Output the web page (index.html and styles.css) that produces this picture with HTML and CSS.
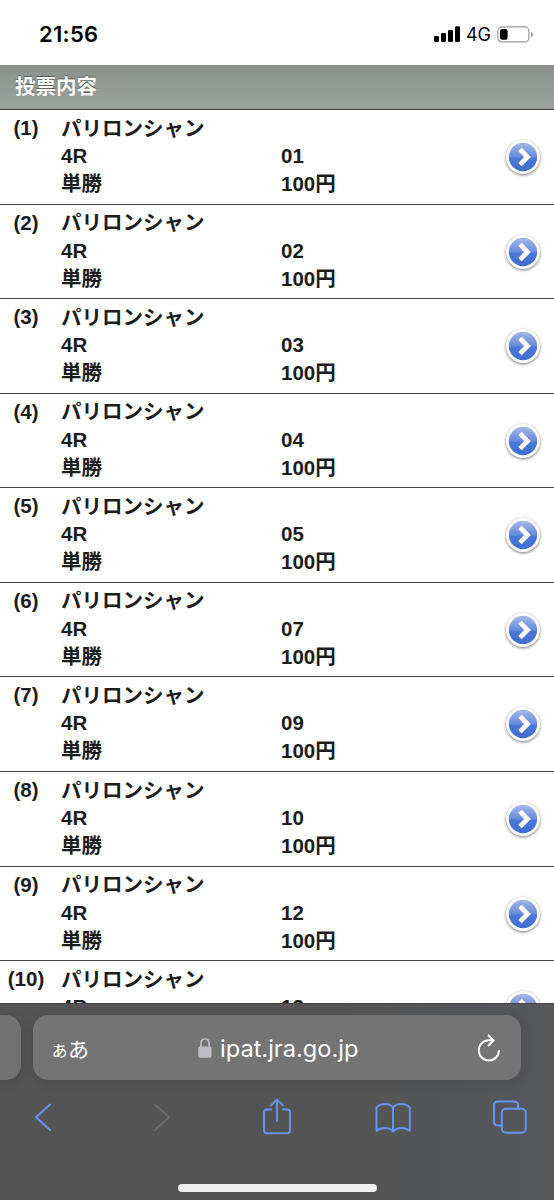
FILE: index.html
```html
<!DOCTYPE html>
<html lang="ja">
<head>
  <meta charset="UTF-8">
  <meta name="viewport" content="width=device-width, initial-scale=1.0">
  <title>投票内容</title>
  <link rel="stylesheet" href="styles.css">
</head>
<body>
  <!-- Shared arrow button used by every row -->
  <svg class="defs" width="0" height="0">
    <defs>
      <linearGradient id="blue" x1="0" y1="0" x2="0" y2="1">
        <stop offset="0" stop-color="#a5b9e9"/>
        <stop offset="0.5" stop-color="#668bdb"/>
        <stop offset="0.55" stop-color="#4c78d5"/>
        <stop offset="1" stop-color="#3e6dd2"/>
      </linearGradient>
      <symbol id="arrow" viewBox="0 0 36 36">
        <circle cx="18" cy="18" r="17" fill="#fff"/>
        <circle cx="18" cy="18" r="14.2" fill="url(#blue)"/>
        <path d="M15 10.3 L22.5 18 L15 25.7" fill="none" stroke="#fff" stroke-width="4.8"/>
      </symbol>
    </defs>
  </svg>

  <div class="status-bar">
    <span class="time">21:56</span>
    <div class="status-icons">
      <svg width="27" height="17" viewBox="0 0 27 17">
        <rect x="0" y="10" width="5" height="6" rx="1.3"/>
        <rect x="7" y="7" width="5" height="9" rx="1.3"/>
        <rect x="14" y="4" width="5" height="12" rx="1.3"/>
        <rect x="21" y="0.3" width="5" height="15.7" rx="1.3"/>
      </svg>
      <span class="network">4G</span>
      <svg width="37" height="17" viewBox="0 0 37 17">
        <rect x="0.8" y="0.9" width="31" height="15" rx="4" fill="none" stroke="#999" stroke-width="1.2"/>
        <rect x="3" y="3" width="7.6" height="10.8" rx="2.3"/>
        <path d="M34 5.7 Q36 6.3 36 8.4 Q36 10.5 34 11.1 Z" fill="#999"/>
      </svg>
    </div>
  </div>

  <h1 class="title">投票内容</h1>

  <ul class="bets">
    <li class="bet">
      <span class="no">(1)</span>
      <div class="detail">
        <span class="place">パリロンシャン</span>
        <span>4R</span><span>01</span>
        <span>単勝</span><span>100円</span>
      </div>
      <svg class="arrow"><use href="#arrow"/></svg>
    </li>
    <li class="bet">
      <span class="no">(2)</span>
      <div class="detail">
        <span class="place">パリロンシャン</span>
        <span>4R</span><span>02</span>
        <span>単勝</span><span>100円</span>
      </div>
      <svg class="arrow"><use href="#arrow"/></svg>
    </li>
    <li class="bet">
      <span class="no">(3)</span>
      <div class="detail">
        <span class="place">パリロンシャン</span>
        <span>4R</span><span>03</span>
        <span>単勝</span><span>100円</span>
      </div>
      <svg class="arrow"><use href="#arrow"/></svg>
    </li>
    <li class="bet">
      <span class="no">(4)</span>
      <div class="detail">
        <span class="place">パリロンシャン</span>
        <span>4R</span><span>04</span>
        <span>単勝</span><span>100円</span>
      </div>
      <svg class="arrow"><use href="#arrow"/></svg>
    </li>
    <li class="bet">
      <span class="no">(5)</span>
      <div class="detail">
        <span class="place">パリロンシャン</span>
        <span>4R</span><span>05</span>
        <span>単勝</span><span>100円</span>
      </div>
      <svg class="arrow"><use href="#arrow"/></svg>
    </li>
    <li class="bet">
      <span class="no">(6)</span>
      <div class="detail">
        <span class="place">パリロンシャン</span>
        <span>4R</span><span>07</span>
        <span>単勝</span><span>100円</span>
      </div>
      <svg class="arrow"><use href="#arrow"/></svg>
    </li>
    <li class="bet">
      <span class="no">(7)</span>
      <div class="detail">
        <span class="place">パリロンシャン</span>
        <span>4R</span><span>09</span>
        <span>単勝</span><span>100円</span>
      </div>
      <svg class="arrow"><use href="#arrow"/></svg>
    </li>
    <li class="bet">
      <span class="no">(8)</span>
      <div class="detail">
        <span class="place">パリロンシャン</span>
        <span>4R</span><span>10</span>
        <span>単勝</span><span>100円</span>
      </div>
      <svg class="arrow"><use href="#arrow"/></svg>
    </li>
    <li class="bet">
      <span class="no">(9)</span>
      <div class="detail">
        <span class="place">パリロンシャン</span>
        <span>4R</span><span>12</span>
        <span>単勝</span><span>100円</span>
      </div>
      <svg class="arrow"><use href="#arrow"/></svg>
    </li>
    <li class="bet">
      <span class="no">(10)</span>
      <div class="detail">
        <span class="place">パリロンシャン</span>
        <span>4R</span><span>13</span>
      </div>
      <svg class="arrow"><use href="#arrow"/></svg>
    </li>
  </ul>

  <!-- Browser bar -->
  <div class="browser">
    <div class="tabs">
      <div class="prev-tab"></div>
      <div class="address">
        <span class="reader"><small>ぁ</small>あ</span>
        <div class="url">
          <svg width="14" height="20" viewBox="0 0 14 20">
            <path d="M3 9 V5.5 Q3 1 7 1 Q11 1 11 5.5 V9" fill="none" stroke="#bdbcc3" stroke-width="1.7"/>
            <rect x="0.3" y="8.4" width="13.2" height="11.3" rx="1.8" fill="#bdbcc3"/>
          </svg>
          <span>ipat.jra.go.jp</span>
        </div>
        <svg class="reload" width="24" height="28" viewBox="0 0 24 28">
          <path d="M22 16.3 A10.1 10.1 0 1 1 11.9 6.2 H16"/>
          <path d="M11 1 L16.5 6.4 L11 12"/>
        </svg>
      </div>
    </div>
    <div class="toolbar">
      <svg width="36" height="40" viewBox="0 0 36 40">
        <path d="M25 7.5 L11 20.3 L25 33"/>
      </svg>
      <svg class="disabled" width="36" height="40" viewBox="0 0 36 40">
        <path d="M12 7.5 L26 20.3 L12 33"/>
      </svg>
      <svg width="36" height="40" viewBox="0 0 36 40">
        <path d="M13 12.5 H9 Q6 12.5 6 15.5 V33.2 Q6 36.2 9 36.2 H29 Q32 36.2 32 33.2 V15.5 Q32 12.5 29 12.5 H25"/>
        <path d="M19 24 V2.8 M13 8.4 L19 2.4 L25 8.4"/>
      </svg>
      <svg width="40" height="40" viewBox="0 0 40 40">
        <path d="M20 34.5 V10.5 Q17.5 7 12 7 Q6.5 7 3.5 10.5 V33.8 Q6.5 31 12 31 Q17 31 20 34.5 Q23 31 28.5 31 Q33.5 31 36.8 33.8 V10.5 Q33.5 7 28 7 Q22.5 7 20 10.5"/>
      </svg>
      <svg width="40" height="40" viewBox="0 0 40 40">
        <path d="M11.5 28.5 H8 Q4 28.5 4 24.5 V8.5 Q4 4.5 8 4.5 H24 Q28 4.5 28 8.5 V11.5"/>
        <rect x="11.8" y="11.8" width="24" height="24" rx="4"/>
      </svg>
    </div>
    <div class="home-bar"></div>
  </div>
</body>
</html>
```
FILE: styles.css
```css
* {
  box-sizing: border-box;
}

body {
  margin: 0;
  height: 1200px;
  display: flex;
  flex-direction: column;
  overflow: hidden;
  background-color: #fff;
  color: #1c1c1c;
  font-family: "Liberation Sans", "Noto Sans CJK JP", sans-serif;
}

.defs {
  position: absolute;
}

/* Status bar */
.status-bar {
  flex: none;
  height: 65px;
  padding: 3px 20px 0 39px;
  display: flex;
  align-items: center;
  justify-content: space-between;
  color: #000;
  font-family: Inter, sans-serif;
}

.time {
  font-size: 22px;
  font-weight: 600;
  letter-spacing: 0.3px;
}

.status-icons {
  display: flex;
  align-items: center;
}

.network {
  margin: 0 6px 0 5px;
  font-size: 18px;
}

.title {
  flex: none;
  height: 45px;
  margin: 0;
  padding-left: 15px;
  border-bottom: 1px solid #3c3f3d;
  background: linear-gradient(#8b918c, #9ca29e);
  color: #fff;
  font-size: 20.5px;
  line-height: 43px;
  text-shadow: 0 -1px 1px rgba(0, 0, 0, 0.4);
}

/* List of bets */
.bets {
  flex: 1;
  min-height: 0;
  margin: 0;
  padding: 0;
  overflow: hidden;
  list-style: none;
  font-size: 20.5px;
  font-weight: bold;
}

.bet {
  height: 94.58px;
  display: flex;
  border-bottom: 1.5px solid #444;
}

.no {
  width: 52px;
  margin-right: 9px;
  line-height: 35px;
  text-align: center;
}

.detail {
  flex: 1;
  display: grid;
  grid-template-columns: 220px 1fr;
  grid-template-rows: 35px 22px 34px;
  align-items: center;
  line-height: 22px;
}

.place {
  grid-column: 1 / 3;
  padding-top: 2px;
}

.arrow {
  width: 36px;
  height: 36px;
  margin: 29px 13px 0 0;
  filter: drop-shadow(0 1px 1.5px rgba(0, 0, 0, 0.55));
}

/* Browser bar */
.browser {
  flex: none;
  height: 197px;
  display: flex;
  flex-direction: column;
  align-items: center;
  border-top: 1px solid #454545;
  background: linear-gradient(90deg, #545454 60%, #55575b);
}

.tabs {
  width: 100%;
  display: flex;
  gap: 12px;
  padding-top: 11px;
}

.prev-tab {
  width: 21px;
  height: 65px;
  border-radius: 0 15px 15px 0;
  background-color: #727272;
  box-shadow: 0 2px 12px rgba(0, 0, 0, 0.12);
}

.address {
  width: 488px;
  height: 65px;
  padding: 0 20px 0 17px;
  display: grid;
  grid-template-columns: 148px 1fr 24px;
  align-items: center;
  border-radius: 15px;
  background-color: #747474;
  box-shadow: 0 2px 12px rgba(0, 0, 0, 0.12);
  color: #fff;
}

.reader {
  font-family: "Noto Sans CJK JP", sans-serif;
  font-size: 21px;
  letter-spacing: -1px;
  white-space: nowrap;
}

.reader small {
  font-size: 19px;
}

.url {
  display: flex;
  align-items: center;
  gap: 8px;
  padding-top: 2px;
  font-family: Inter, sans-serif;
  font-size: 23.6px;
}

.url svg {
  margin-bottom: 2px;
}

.reload {
  fill: none;
  stroke: #fff;
  stroke-width: 2;
}

.toolbar {
  width: 100%;
  padding-left: 25px;
  margin-top: 17px;
  display: grid;
  grid-template-columns: 118px 115px 115px 117px 40px;
}

.toolbar svg {
  fill: none;
  stroke: #6494f0;
  stroke-width: 2;
  stroke-linecap: round;
  stroke-linejoin: round;
}

.toolbar .disabled {
  stroke: #6c6c6c;
}

.home-bar {
  width: 199px;
  height: 8px;
  margin-top: 47px;
  border-radius: 4px;
  background-color: #f0f0f0;
}
```
